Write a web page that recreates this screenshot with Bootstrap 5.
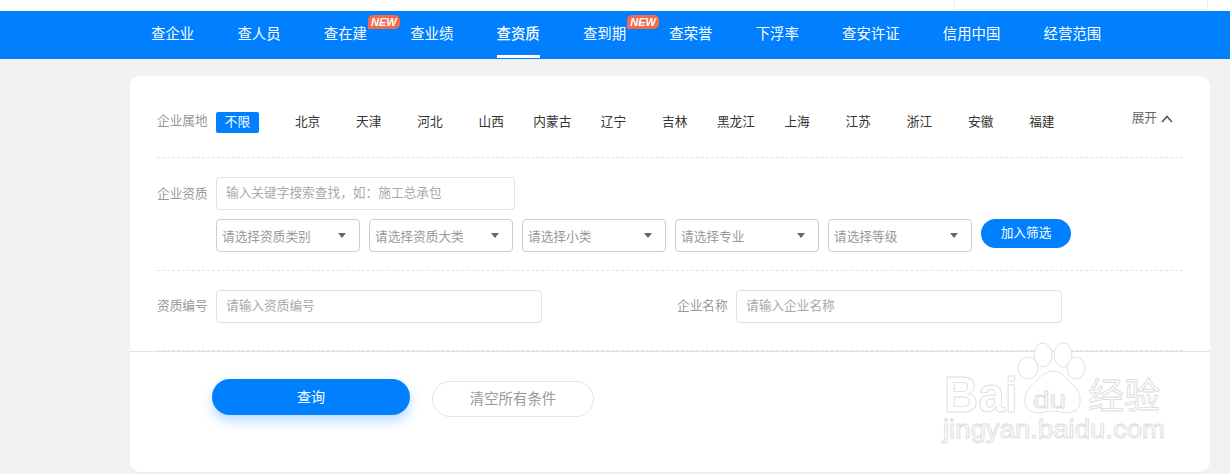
<!DOCTYPE html>
<html lang="zh">
<head>
<meta charset="utf-8">
<title>查资质</title>
<link href="https://cdn.jsdelivr.net/npm/bootstrap@5.3.0/dist/css/bootstrap.min.css" rel="stylesheet">
<style>
html,body{height:474px;overflow:hidden}
body{background:#f2f2f2;font-family:"Noto Sans CJK SC","Liberation Sans",sans-serif;font-size:12.7px;position:relative}
.topstrip{height:11px;background:#fff}
.topbox{width:254px;height:10px;margin-right:22px;border:1px solid #eee;border-top:0}
.mainnav{height:48px;background:#0080ff;padding-left:151px;gap:43.2px}
.navitem{position:relative;color:#fff;font-size:14.4px;line-height:44px;height:48px;text-decoration:none;white-space:nowrap}
.navitem.on{font-weight:500}
.navitem.on::after{content:"";position:absolute;left:0;right:0;bottom:1px;height:3px;background:#fff}
.newtag{position:absolute;left:100%;top:4px;margin-left:1px;width:32px;height:14px;background:#f2694d;color:#fff;font-size:11px;font-style:italic;font-weight:700;line-height:14px;text-align:center;border-radius:5px 5px 5px 0;font-family:"Liberation Sans",sans-serif}
.panel{width:1080px;height:397px;margin:17px 0 0 130px;background:#fff;border-radius:10px;border-bottom:1px solid #e8e8e8}
.inner{padding:0 27px}
.lbl{width:59px;flex:none;color:#999;white-space:nowrap}
.rowregion{height:82px;border-bottom:1px dashed #e2e2e2;padding-top:36px}
.lbltop{line-height:16px}
.pick{width:43px;height:21px;line-height:18px;text-align:center;background:#0080ff;color:#fff;border-radius:2px;flex:none;margin-right:18px}
.cityname{width:61.2px;flex:none;text-align:center;color:#333;line-height:18px;white-space:nowrap}
.more{color:#666;margin-left:auto;margin-right:10px;margin-top:-6px;white-space:nowrap;line-height:21px}
.more svg{margin-left:4px;vertical-align:-1px}
.rowqual{height:113px;border-bottom:1px dashed #e2e2e2;padding-top:19px}
.lblmid{line-height:31px;height:33px}
.field.form-control{height:33px;border:1px solid #e0e0e0;border-radius:4px;padding:0 9px 4px;font-size:12.7px;color:#333;box-shadow:none}
.field.form-control::placeholder{color:#aaa}
.qualkey{font-size:12.6px}
.w299{width:299px}.w326{width:326px}
.selectrow{margin:9px 0 0 59px;gap:9px}
.choose.form-select{width:144px;height:33px;border:1px solid #ccc;border-radius:4px;padding:0 0 0 5px;font-size:12.7px;color:#999;flex:none;background-position:right 13px center;background-size:8px 5px;background-image:url("data:image/svg+xml,%3csvg xmlns='http://www.w3.org/2000/svg' viewBox='0 0 10 6'%3e%3cpath fill='%23666' d='M0 0h10L5 6z'/%3e%3c/svg%3e")}
.addbtn.btn{width:90px;height:29px;padding:0 0 3px;border-radius:15px;background:#0080ff;border:0;color:#fff;font-size:12.7px;line-height:26px;flex:none}
.rownum{height:80px;padding-top:19px;border-bottom:1px dashed #e2e2e2}
.rownum .lblmid{line-height:29px}
.lbl2{margin-left:135px;width:59px}
.rule{border-top:1px solid #e4e4e4}
.actions{padding:27px 0 0 82px;gap:22px}
.gobtn.btn{width:198px;height:36px;padding:0 0 2px;border:0;border-radius:18px;background:#0080ff;color:#fff;font-size:14px;box-shadow:0 6px 12px rgba(0,128,255,.28)}
.clearbtn.btn{width:162px;height:36px;margin-top:2px;padding:0 0 3px;border:1px solid #e5e5e5;border-radius:18px;background:#fff;color:#999;font-size:14.4px}
.wmark{position:absolute;left:930px;top:335px;pointer-events:none}
.wmark text{fill:#fff;stroke:#dcdcdc;stroke-width:.9;font-family:"Liberation Sans",sans-serif}
.wmark .cjk{font-family:"Noto Sans CJK SC",sans-serif}
</style>
</head>
<body>
<div class="topstrip d-flex justify-content-end"><div class="topbox"></div></div>
<nav class="mainnav d-flex">
  <a class="navitem" href="#">查企业</a>
  <a class="navitem" href="#">查人员</a>
  <a class="navitem" href="#">查在建<span class="newtag">NEW</span></a>
  <a class="navitem" href="#">查业绩</a>
  <a class="navitem on" href="#">查资质</a>
  <a class="navitem" href="#">查到期<span class="newtag">NEW</span></a>
  <a class="navitem" href="#">查荣誉</a>
  <a class="navitem" href="#">下浮率</a>
  <a class="navitem" href="#">查安许证</a>
  <a class="navitem" href="#">信用中国</a>
  <a class="navitem" href="#">经营范围</a>
</nav>
<main class="panel">
  <div class="inner">
    <div class="rowregion d-flex align-items-start">
      <div class="lbl lbltop">企业属地</div>
      <div class="pick">不限</div>
      <div class="cityname">北京</div><div class="cityname">天津</div><div class="cityname">河北</div><div class="cityname">山西</div><div class="cityname">内蒙古</div><div class="cityname">辽宁</div><div class="cityname">吉林</div><div class="cityname">黑龙江</div><div class="cityname">上海</div><div class="cityname">江苏</div><div class="cityname">浙江</div><div class="cityname">安徽</div><div class="cityname">福建</div>
      <div class="more">展开<svg width="12" height="8" viewBox="0 0 12 8"><path d="M1 7l5-5.5L11 7" fill="none" stroke="#555" stroke-width="1.6"/></svg></div>
    </div>
    <div class="rowqual">
      <div class="d-flex align-items-start">
        <div class="lbl lblmid">企业资质</div>
        <input class="field qualkey form-control w299" placeholder="输入关键字搜索查找，如：施工总承包">
      </div>
      <div class="selectrow d-flex align-items-start">
        <select class="choose form-select"><option>请选择资质类别</option></select>
        <select class="choose form-select"><option>请选择资质大类</option></select>
        <select class="choose form-select"><option>请选择小类</option></select>
        <select class="choose form-select"><option>请选择专业</option></select>
        <select class="choose form-select"><option>请选择等级</option></select>
        <button class="addbtn btn" type="button">加入筛选</button>
      </div>
    </div>
    <div class="rownum d-flex align-items-start">
      <div class="lbl lblmid">资质编号</div>
      <input class="field form-control w326" placeholder="请输入资质编号">
      <div class="lbl lbl2 lblmid">企业名称</div>
      <input class="field form-control w326" placeholder="请输入企业名称">
    </div>
  </div>
  <div class="rule"></div>
  <div class="actions d-flex align-items-start">
    <button class="gobtn btn" type="button">查询</button>
    <button class="clearbtn btn" type="button">清空所有条件</button>
  </div>
</main>
<svg class="wmark" width="250" height="120" viewBox="0 0 250 120" aria-hidden="true">
  <g fill="#fff" stroke="#dcdcdc" stroke-width=".9">
    <ellipse cx="113" cy="20" rx="9" ry="12"/>
    <ellipse cx="133" cy="20" rx="9" ry="12"/>
    <ellipse cx="98" cy="33" rx="10" ry="11"/>
    <ellipse cx="146" cy="33" rx="9" ry="11"/>
    <path d="M123 36c10 0 14 9 21 15 8 7 9 24-2 26-7 2-13-1-19-1s-13 3-20 1c-11-2-10-19-2-26 7-6 12-15 22-15z"/>
  </g>
  <text x="14" y="77" font-size="50" font-weight="700" textLength="74" lengthAdjust="spacingAndGlyphs">Bai</text>
  <text x="103" y="73" font-size="24" textLength="33" lengthAdjust="spacingAndGlyphs">du</text>
  <text class="cjk" x="158" y="74" font-size="36">经验</text>
  <text x="13" y="103" font-size="26" textLength="222" lengthAdjust="spacingAndGlyphs">jingyan.baidu.com</text>
</svg>
</body>
</html>
